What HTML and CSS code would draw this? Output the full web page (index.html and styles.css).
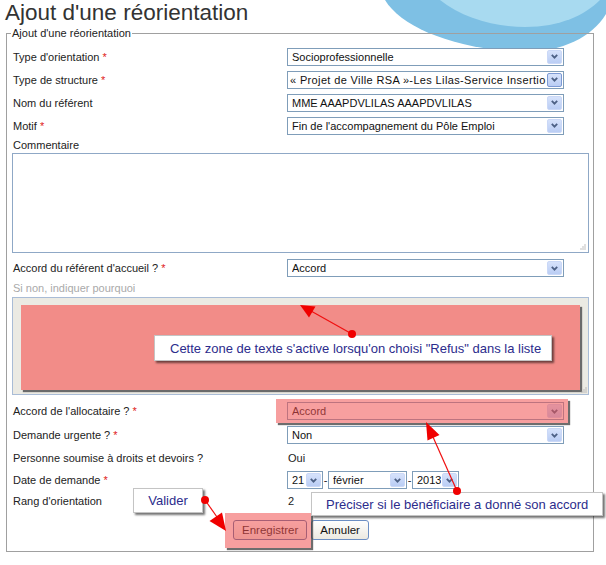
FILE: index.html
```html
<!DOCTYPE html>
<html lang="fr">
<head>
<meta charset="utf-8">
<title>Ajout d'une réorientation</title>
<link rel="stylesheet" href="styles.css">
</head>
<body>
<div class="page">
  <svg class="swoosh" width="606" height="70" viewBox="0 0 606 70" aria-hidden="true">
    <path d="M385,0 C400,25 445,45 505,51 C555,56 590,40 606,14 L606,0 Z" fill="#7ec0e4"/>
    <path d="M440,0 C462,18 495,27 525,27 C560,27 585,15 600,0 Z" fill="#a8daf0"/>
  </svg>

  <h1 class="title">Ajout d'une réorientation</h1>

  <fieldset class="box">
    <legend>Ajout d'une réorientation</legend>

    <div class="row">
      <span class="lbl">Type d'orientation <b class="req">*</b></span>
      <div class="sel"><span class="val">Socioprofessionnelle</span><span class="arr"><svg width="7" height="5" viewBox="0 0 7 5"><polyline points="0.8,0.8 3.5,3.6 6.2,0.8"/></svg></span></div>
    </div>
    <div class="row">
      <span class="lbl">Type de structure <b class="req">*</b></span>
      <div class="sel"><span class="val val-tight">« Projet de Ville RSA »-Les Lilas-Service Insertion</span><span class="arr arr-hover"><svg width="7" height="5" viewBox="0 0 7 5"><polyline points="0.8,0.8 3.5,3.6 6.2,0.8"/></svg></span></div>
    </div>
    <div class="row">
      <span class="lbl">Nom du référent</span>
      <div class="sel"><span class="val">MME AAAPDVLILAS AAAPDVLILAS</span><span class="arr"><svg width="7" height="5" viewBox="0 0 7 5"><polyline points="0.8,0.8 3.5,3.6 6.2,0.8"/></svg></span></div>
    </div>
    <div class="row">
      <span class="lbl">Motif <b class="req">*</b></span>
      <div class="sel"><span class="val">Fin de l'accompagnement du Pôle Emploi</span><span class="arr"><svg width="7" height="5" viewBox="0 0 7 5"><polyline points="0.8,0.8 3.5,3.6 6.2,0.8"/></svg></span></div>
    </div>

    <div class="line-lbl">Commentaire</div>
    <div class="ta">
      <svg class="grip" width="6" height="6" viewBox="0 0 6 6"><circle cx="5" cy="1" r="0.7"/><circle cx="3" cy="3" r="0.7"/><circle cx="5" cy="3" r="0.7"/><circle cx="1" cy="5" r="0.7"/><circle cx="3" cy="5" r="0.7"/><circle cx="5" cy="5" r="0.7"/></svg>
    </div>

    <div class="row row-24 gap-3">
      <span class="lbl">Accord du référent d'accueil ? <b class="req">*</b></span>
      <div class="sel"><span class="val">Accord</span><span class="arr"><svg width="7" height="5" viewBox="0 0 7 5"><polyline points="0.8,0.8 3.5,3.6 6.2,0.8"/></svg></span></div>
    </div>
    <div class="hint">Si non, indiquer pourquoi</div>
    <div class="ta-dis">
      <div class="hl-block"></div>
      <svg class="grip grip-abs" width="6" height="6" viewBox="0 0 6 6"><circle cx="5" cy="1" r="0.7"/><circle cx="3" cy="3" r="0.7"/><circle cx="5" cy="3" r="0.7"/><circle cx="1" cy="5" r="0.7"/><circle cx="3" cy="5" r="0.7"/><circle cx="5" cy="5" r="0.7"/></svg>
    </div>

    <div class="row row-24 gap-4">
      <span class="lbl">Accord de l'allocataire ? <b class="req">*</b></span>
      <div class="sel"><span class="val">Accord</span><span class="arr"><svg width="7" height="5" viewBox="0 0 7 5"><polyline points="0.8,0.8 3.5,3.6 6.2,0.8"/></svg></span></div>
    </div>
    <div class="row row-24">
      <span class="lbl">Demande urgente ? <b class="req">*</b></span>
      <div class="sel"><span class="val">Non</span><span class="arr"><svg width="7" height="5" viewBox="0 0 7 5"><polyline points="0.8,0.8 3.5,3.6 6.2,0.8"/></svg></span></div>
    </div>
    <div class="row row-21">
      <span class="lbl">Personne soumise à droits et devoirs ?</span>
      <span class="txt">Oui</span>
    </div>
    <div class="row row-24">
      <span class="lbl">Date de demande <b class="req">*</b></span>
      <div class="date">
        <div class="sel w-day"><span class="val">21</span><span class="arr"><svg width="7" height="5" viewBox="0 0 7 5"><polyline points="0.8,0.8 3.5,3.6 6.2,0.8"/></svg></span></div>
        <span class="dash">-</span>
        <div class="sel w-month"><span class="val">février</span><span class="arr"><svg width="7" height="5" viewBox="0 0 7 5"><polyline points="0.8,0.8 3.5,3.6 6.2,0.8"/></svg></span></div>
        <span class="dash">-</span>
        <div class="sel w-year"><span class="val">2013</span><span class="arr"><svg width="7" height="5" viewBox="0 0 7 5"><polyline points="0.8,0.8 3.5,3.6 6.2,0.8"/></svg></span></div>
      </div>
    </div>
    <div class="row row-18">
      <span class="lbl">Rang d'orientation</span>
      <span class="txt">2</span>
    </div>

    <div class="btns">
      <button type="button" class="btn">Enregistrer</button>
      <button type="button" class="btn btn-focus">Annuler</button>
    </div>
  </fieldset>

  <div class="ann">
    <div class="hl hl-sel"></div>
    <div class="hl hl-btn"></div>
    <div class="callout c-refus">Cette zone de texte s'active lorsqu'on choisi "Refus" dans la liste</div>
    <div class="callout c-valider">Valider</div>
    <div class="callout c-accord">Préciser si le bénéficiaire a donné son accord</div>
    <svg class="arrows" width="606" height="565" viewBox="0 0 606 565">
      <g stroke="#f01010" stroke-width="1.2" fill="none">
        <line x1="352" y1="334" x2="311" y2="311"/>
        <line x1="205" y1="500" x2="217" y2="517"/>
        <line x1="457" y1="491" x2="433" y2="437"/>
      </g>
      <g fill="#f00000">
        <polygon points="300,305 315.5,306.5 309,317.5"/>
        <circle cx="352" cy="334" r="4"/>
        <polygon points="226,531 222,512.5 209.5,521"/>
        <circle cx="205" cy="500" r="4"/>
        <polygon points="426,422 439.5,435 427.5,440.5"/>
        <circle cx="457" cy="491" r="4"/>
      </g>
    </svg>
  </div>
</div>
</body>
</html>
```

FILE: styles.css
```css
* { box-sizing: border-box; }

body {
  margin: 0;
  background: #fff;
  font-family: "Liberation Sans", Arial, sans-serif;
  font-size: 11px;
  color: #222;
}

.page {
  position: relative;
  width: 606px;
  height: 565px;
  overflow: hidden;
}

.swoosh {
  position: absolute;
  top: 0;
  left: 0;
  z-index: 0;
}

.title {
  position: relative;
  margin: 0;
  padding-left: 5px;
  font-size: 22.5px;
  font-weight: normal;
  line-height: 26px;
  color: #333;
}

.box {
  position: relative;
  margin: 0 0 0 6px;
  width: 588px;
  min-inline-size: 0;
  border: 1px solid #a0a0a0;
  padding: 5px 4px 11px 6px;
}

.box legend {
  padding: 0 1px;
  margin-left: -2px;
  font-size: 11px;
  line-height: 14px;
  color: #222;
}

.row {
  display: grid;
  grid-template-columns: 274px 277px;
  align-items: center;
  height: 23px;
}

.row-24 { height: 24px; }
.row-21 { height: 21px; }
.row-18 { height: 18px; }
.gap-3 { margin-top: 3px; }
.gap-4 { margin-top: 4px; }

.lbl { white-space: nowrap; }

.req {
  font-weight: normal;
  color: #e01818;
}

.txt { padding-left: 1px; }

.sel {
  display: flex;
  align-items: center;
  height: 18px;
  border: 1px solid #7f9db9;
  background: #fff;
  padding: 0 1px 0 4px;
}

.val {
  flex: 1;
  min-width: 0;
  white-space: nowrap;
  overflow: hidden;
  line-height: 16px;
  color: #111;
}

.val-tight {
  margin-left: -2px;
  letter-spacing: 0.36px;
}

.arr {
  flex: none;
  width: 15px;
  height: 14px;
  margin-left: 1px;
  display: flex;
  align-items: center;
  justify-content: center;
  background: linear-gradient(#d6e2fb, #bacdf4);
  border: 1px solid #cad8f7;
  border-radius: 2px;
}

.arr-hover { border-color: #7d9ad4; }

.arr svg polyline {
  fill: none;
  stroke: #4d6185;
  stroke-width: 1.8;
}

.line-lbl {
  height: 16px;
  line-height: 16px;
}

.ta {
  width: 577px;
  height: 100px;
  margin-left: -1px;
  border: 1px solid #8fa8c6;
  background: #fff;
  display: flex;
  justify-content: flex-end;
  align-items: flex-end;
  padding: 2px;
}

.grip circle { fill: #a8a8a8; }

.hint {
  height: 17px;
  line-height: 17px;
  color: #aaa;
}

.ta-dis {
  position: relative;
  width: 577px;
  height: 98px;
  margin-left: -1px;
  border: 1px solid #a9bcd6;
  background: #ebeae3;
  padding: 7px 8px 4px 8px;
}

.hl-block {
  height: 85px;
  background: #f28c88;
  box-shadow: 2px 2px 1px #6a6a6a;
}

.grip-abs {
  position: absolute;
  right: 1px;
  bottom: 1px;
}

.date {
  display: flex;
  align-items: center;
}

.w-day { width: 36px; }
.w-month { width: 79px; }
.w-year { width: 47px; }

.dash {
  width: 5px;
  text-align: center;
}

.btns {
  display: flex;
  justify-content: center;
  gap: 4px;
  margin-top: 10px;
}

.btn {
  height: 20px;
  padding: 0 8px;
  font-family: "Liberation Sans", Arial, sans-serif;
  font-size: 11.5px;
  color: #111;
  border: 1px solid #4f6f9f;
  border-radius: 3px;
  background: linear-gradient(#fefefd, #ebe9e1);
}

.btn-focus { border-color: #6c8fc4; }

.ann {
  position: absolute;
  inset: 0;
  z-index: 5;
  pointer-events: none;
}

.hl {
  position: absolute;
  background: rgba(240, 80, 80, 0.55);
  box-shadow: 2px 2px 1px rgba(60, 60, 60, 0.75);
}

.hl-sel {
  left: 276px;
  top: 399px;
  width: 292px;
  height: 24px;
}

.hl-btn {
  left: 225px;
  top: 513px;
  width: 86px;
  height: 35px;
}

.callout {
  position: absolute;
  display: flex;
  align-items: center;
  background: #fff;
  border: 1px solid #c4c4c4;
  box-shadow: 2px 2px 2px rgba(0, 0, 0, 0.55);
  color: #2c2c8c;
  font-size: 13px;
  white-space: nowrap;
}

.c-refus {
  left: 154px;
  top: 335px;
  width: 398px;
  height: 26px;
  padding-left: 15px;
}

.c-valider {
  left: 133px;
  top: 488px;
  width: 70px;
  height: 25px;
  justify-content: center;
}

.c-accord {
  left: 311px;
  top: 492px;
  width: 292px;
  height: 24px;
  padding-left: 14px;
}

.arrows {
  position: absolute;
  top: 0;
  left: 0;
}
```
